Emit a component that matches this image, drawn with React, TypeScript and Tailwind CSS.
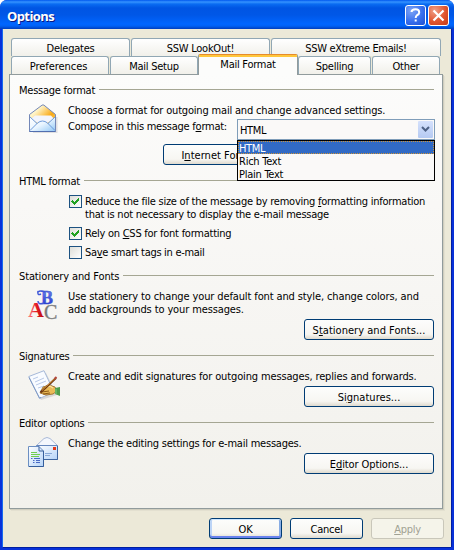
import type { ReactNode } from "react";

function Tab({ className, children }: { className: string; children: ReactNode }) {
  return (
    <div
      className={`flex h-[18px] shrink-0 items-center justify-center rounded-t-[3px] border border-b-0 border-[#91a7b4] bg-linear-to-b from-white to-[#f1f0ea] pt-px whitespace-nowrap ${className}`}
    >
      {children}
    </div>
  );
}

function PushButton({ className = "", children }: { className?: string; children: ReactNode }) {
  return (
    <div
      className={`flex h-[21px] shrink-0 items-center justify-center rounded-[3px] border border-[#003c74] bg-linear-to-b from-[#fdfdfc] via-[#f7f6f2] via-75% to-[#dfdace] pt-px whitespace-nowrap ${className}`}
    >
      <span>{children}</span>
    </div>
  );
}

function Section({ title, track = "", className, children }: { title: string; track?: string; className: string; children: ReactNode }) {
  return (
    <section className={`shrink-0 ${className}`}>
      <div className="flex h-[14px] gap-[4px]">
        <h2 className={`leading-[16px] whitespace-nowrap ${track}`}>{title}</h2>
        <div className="mt-[6px] h-px flex-1 bg-[#a5a693]" />
      </div>
      {children}
    </section>
  );
}

function Check({ on }: { on?: boolean }) {
  return (
    <div className="h-[13px] w-[13px] shrink-0 border border-[#1d5281] bg-linear-to-br from-[#deded8] to-white">
      {on && (
        <svg width="11" height="11" viewBox="0 0 11 11" shapeRendering="crispEdges">
          <path d="M2 4h1v1h1v1h1v-1h1v-1h1v-1h1v-1h1v3h-1v1h-1v1h-1v1h-1v1h-1v-1h-1v-1h-1v-1h-1z" fill="#21a121" />
        </svg>
      )}
    </div>
  );
}

function EnvelopeIcon() {
  return (
    <svg width="32" height="32" viewBox="0 0 32 32" className="shrink-0">
      <defs>
        <linearGradient id="flap" x1="0" x2="1" y1="0" y2="1">
          <stop offset=".25" stopColor="#fff4c8" />
          <stop offset=".6" stopColor="#f9a915" />
          <stop offset="1" stopColor="#fff0b8" />
        </linearGradient>
        <linearGradient id="front" x1="0" x2="1" y1="0" y2="1">
          <stop offset="0" stopColor="#fff" />
          <stop offset=".5" stopColor="#e9f5ff" />
          <stop offset="1" stopColor="#93c8f5" />
        </linearGradient>
      </defs>
      <path d="M3 13 28.500 13 28.500 29 4 29z" fill="#cdcdd0" opacity=".6" />
      <path d="M.500 10.500 13 1.200Q14 .5 15 1.200L26.500 10.500V27.500H.500z" fill="url(#flap)" stroke="#7488b8" />
      <path d="M2 15 6 11.500H22L25 15 18 19H9z" fill="#f3f5fc" />
      <path d="M1 13 8.500 19.500Q13.500 15.500 18.500 19.500L26 13V27H1z" fill="url(#front)" />
      <path d="M1 13 8 19.500M26 13 19 19.500M1 26.500 8.500 19Q13.500 15 18.500 19L26 26.500" fill="none" stroke="#6d9bda" />
      <path d="M.500 27.500H26.500" stroke="#526fb0" />
    </svg>
  );
}

function FontsIcon() {
  return (
    <svg width="32" height="32" viewBox="0 0 32 32" className="shrink-0 overflow-visible">
      <defs>
        <linearGradient id="red" x1="0" x2="1">
          <stop offset="0" stopColor="#ff8888" />
          <stop offset=".5" stopColor="#e51c23" />
          <stop offset="1" stopColor="#b90c13" />
        </linearGradient>
        <linearGradient id="blue" x1="0" x2="0" y1="0" y2="1">
          <stop offset="0" stopColor="#7288ee" />
          <stop offset="1" stopColor="#1c30cf" />
        </linearGradient>
      </defs>
      <g fontFamily="'Liberation Serif', serif" letterSpacing="0">
        <text x="13" y="14" fontSize="18" fontWeight="700" fill="url(#blue)" stroke="#3346c9" strokeWidth=".4">B</text>
        <path d="M10 2Q12 0 17 2M10 1Q9 6 13 4M10 11Q10 15 16 13" fill="none" stroke="#4058d8" strokeWidth="1.500" />
        <text x="0" y="27" fontSize="22" fontWeight="700" fill="url(#red)">A</text>
        <text x="16" y="29" fontSize="20" fill="#777" stroke="#888" strokeWidth=".4">C</text>
      </g>
    </svg>
  );
}

function SignatureIcon() {
  return (
    <svg width="34" height="32" viewBox="0 0 34 32" className="shrink-0">
      <path d="M3 8 18 3 29 25 13 30z" fill="#ccc" opacity=".7" />
      <path d="M.800 6.500 16 .7 26 22 11.500 28.500z" fill="#f8fbff" stroke="#a5b8d8" />
      <path d="M1 7.500 11.500 28 13 27.500" fill="none" stroke="#7d98c4" />
      <path d="M5 9 10 7M7 12 16 8M8 15 18 11M10 18 16 16M12 21 15 20" stroke="#b8c9e8" />
      <path d="M12 23 15 17 21 15 27 17 29 21 25 24 18 25z" fill="#eabb58" stroke="#94621a" strokeWidth=".8" />
      <path d="M14 22 21 21M15 24 22 23" stroke="#8d5a17" />
      <path d="M17 17 22 16 25 18" fill="none" stroke="#ffe39a" strokeWidth="1.500" />
      <path d="M27 18 32 17V26L27 24z" fill="#4e9d4b" />
      <path d="M28 19V24" stroke="#82c87b" />
      <path d="M12.500 22.500 28 8" stroke="#6b3510" strokeWidth="2" />
      <path d="M14 20.500 27 8.500" stroke="#e9a034" strokeWidth=".8" />
      <path d="M26.500 9 28.500 7" stroke="#b4483c" strokeWidth="2" />
    </svg>
  );
}

function EditorIcon() {
  return (
    <svg width="32" height="32" viewBox="0 0 32 32" className="shrink-0">
      <defs>
        <linearGradient id="paper" x1="0" x2="1" y1="0" y2="1">
          <stop offset="0" stopColor="#fff" />
          <stop offset="1" stopColor="#b5d3f8" />
        </linearGradient>
      </defs>
      <path d="M8.500 8.500 16 1.500Q19 -.5 22 1.500L29.500 8.500z" fill="#f4f7fd" stroke="#a9b9d7" />
      <path d="M8.500 8.500H29.500V22.500H8.500z" fill="url(#paper)" stroke="#6586bd" />
      <path d="M29.500 9V22.500H16" fill="none" stroke="#3e659f" />
      <path d="M25 10h3v3h-3z" fill="#e43a18" />
      <path d="M17 16.500H24M17 18.500H22" stroke="#88a8d8" />
      <path d="M.500 9.500H11L15.500 14V29.500H.500z" fill="url(#paper)" stroke="#6c8fc2" />
      <path d="M1 29.500H15.500V14M11 9.500V14H15.500" fill="none" stroke="#365e9c" />
      <path d="M3 15.500H9M3 17.500H12M3 19.500H11" stroke="#70cf50" />
      <path d="M3 21.500H4.500M6 21.500H12M5 23.500H6.500M8 23.500H12M5 25.500H6.500M8 25.500H12" stroke="#496ac4" />
    </svg>
  );
}

export default function App() {
  return (
    <main className="h-[550px] w-[454px] overflow-hidden bg-white font-['DejaVu_Sans_Condensed','DejaVu_Sans',sans-serif] text-[11px] leading-[13px] tracking-[-0.25px] text-black">
      <div className="flex h-full flex-col overflow-hidden rounded-t-[7px] bg-[#0831d9]">
        <header className="flex h-[29px] shrink-0 items-center bg-[linear-gradient(to_bottom,#0058ee_0px,#3593ff_2px,#0a6cf2_4px,#0055e3_8px,#0057e7_15px,#0066ff_24px,#0061f5_26px,#003ebd_29px)] pr-[5px] pl-[7px]">
          <h1 className="flex-1 pt-[3px] font-['Open_Sans',sans-serif] text-[13px] font-bold tracking-[-0.6px] text-white [text-shadow:1px_1px_#0a1883]">Options</h1>
          <div className="flex gap-[2px] pt-[2px]">
            <div className="flex h-[21px] w-[21px] items-center justify-center rounded-[3px] border border-white bg-[radial-gradient(circle_at_30%_25%,#7fa5f5,#376fee_55%,#204fd0)]">
              <svg width="19" height="19" viewBox="0 0 19 19" fill="none" stroke="white" strokeWidth="2">
                <path d="M5.500 6Q5.800 3.300 9.500 3.300T13.200 6.500Q13.200 8.400 10.900 9.300Q9.700 10 9.700 12M9.700 13.500V15.500" />
              </svg>
            </div>
            <div className="flex h-[21px] w-[21px] items-center justify-center rounded-[3px] border border-white bg-[radial-gradient(circle_at_30%_25%,#f0a088,#e0552f_55%,#c83a15)]">
              <svg width="19" height="19" viewBox="0 0 19 19" stroke="white" strokeWidth="2.200">
                <path d="M4.500 4.500 14.500 14.500M14.500 4.500 4.500 14.500" />
              </svg>
            </div>
          </div>
        </header>

        <div className="mr-[3px] mb-[3px] ml-[3px] flex flex-1 flex-col bg-[#ece9d8] px-[6px] pt-[9px] shadow-[-1px_0_#166aee,0_1px_#001ea0,1px_0_#001ea0]">
          <nav className="shrink-0">
            <div className="flex gap-px pl-[2px]">
              <Tab className="w-[119px]">Delegates</Tab>
              <Tab className="w-[139px]">SSW LookOut!</Tab>
              <Tab className="w-[170px] tracking-[-0.33px]">SSW eXtreme Emails!</Tab>
            </div>
            <div className="flex h-[18px] items-end pl-[2px]">
              <Tab className="mr-px w-[98px] pr-[3px] tracking-[-0.05px]">Preferences</Tab>
              <Tab className="w-[88px]">Mail Setup</Tab>
              <div className="z-10 -mb-px flex h-[21px] w-[100px] shrink-0 flex-col overflow-hidden rounded-t-[2px] border-x border-x-[#919b9c] bg-[#fcfcfb]">
                <div className="h-[3px] shrink-0 border-t border-[#e68b2c] bg-[#ffc73c]" />
                <span className="pt-px text-center">Mail Format</span>
              </div>
              <Tab className="mr-px w-[73px]">Spelling</Tab>
              <Tab className="w-[68px]">Other</Tab>
            </div>
          </nav>

          <div className="flex h-[435px] w-[434px] shrink-0 flex-col border border-[#919b9c] bg-linear-to-b from-[#fcfcfb] via-[#f9f8f6] via-30% to-[#f2f1ec] pt-[8px] pr-[8px] pl-[9px] shadow-[1px_1px_#d0cebf,2px_2px_#e3e0d0]">
            <Section title="Message format" className="h-[91px]">
              <div className="flex pt-[7px] pl-[10px]">
                <EnvelopeIcon />
                <div className="shrink-0 pl-[7px]">
                  <p className="tracking-[-0.18px] whitespace-nowrap">Choose a format for outgoing mail and change advanced settings.</p>
                  <div className="flex items-start">
                    <span className="w-[169px] shrink-0 pt-[3px] whitespace-nowrap">Compose in this message f<u>o</u>rmat:</span>
                    <div className="relative mt-[2px] h-[21px] w-[198px] shrink-0 border border-[#7f9db9] bg-[#faf9f8]">
                      <div className="flex h-full items-center justify-between pr-px pl-[2px]">
                        <span className="pt-[2px] tracking-[-0.35px]">HTML</span>
                        <div className="flex h-[17px] w-[15px] items-center justify-center rounded-[1px] bg-linear-to-b from-[#d5e1fc] to-[#b5caf2]">
                          <svg width="9" height="7" viewBox="0 0 9 7" fill="none" stroke="#4d6185" strokeWidth="2">
                            <path d="M1 1 4.500 4.500 8 1" />
                          </svg>
                        </div>
                      </div>
                      <div className="absolute top-[20px] -left-px z-10 h-[41px] w-[198px] border border-black bg-[#faf9f8]">
                        <div className="h-[13px] border border-dotted border-[#ce953a] bg-[#316ac5] leading-[13px] tracking-[-0.35px] text-white">HTML</div>
                        <div className="h-[13px] pl-px leading-[15px]">Rich Text</div>
                        <div className="h-[13px] pl-px leading-[15px]">Plain Text</div>
                      </div>
                    </div>
                  </div>
                </div>
              </div>
              <PushButton className="mt-[4px] ml-[144px] w-[124px] tracking-[0.03px]">I<u>n</u>ternet Format...</PushButton>
            </Section>

            <Section title="HTML format" className="h-[95px]">
              <div className="flex gap-[3px] pt-[7px] pl-[50px]">
                <Check on />
                <p className="tracking-[-0.24px] whitespace-nowrap">
                  Reduce the file size of the message by removing <u>f</u>ormatting information
                  <br />
                  that is not necessary to display the e-mail message
                </p>
              </div>
              <div className="flex gap-[3px] pt-[6px] pl-[50px]">
                <Check on />
                <p className="whitespace-nowrap">Rely on <u>C</u>SS for font formatting</p>
              </div>
              <div className="flex gap-[3px] pt-[6px] pl-[50px]">
                <Check />
                <p className="tracking-[-0.3px] whitespace-nowrap">Sa<u>v</u>e smart tags in e-mail</p>
              </div>
            </Section>

            <Section title="Stationery and Fonts" track="tracking-[-0.12px]" className="h-[80px]">
              <div className="flex h-[36px] pt-[7px] pl-[9px]">
                <FontsIcon />
                <p className="pl-[8px] tracking-[-0.12px] whitespace-nowrap">
                  Use stationery to change your default font and style, change colors, and
                  <br />
                  add backgrounds to your messages.
                </p>
              </div>
              <PushButton className="ml-auto w-[130px] tracking-[0.03px]">S<u>t</u>ationery and Fonts...</PushButton>
            </Section>

            <Section title="Signatures" className="h-[67px]">
              <div className="flex h-[23px] pt-[7px] pl-[9px]">
                <SignatureIcon />
                <p className="pl-[6px] tracking-[-0.14px] whitespace-nowrap">Create and edit signatures for outgoing messages, replies and forwards.</p>
              </div>
              <PushButton className="ml-auto w-[130px] tracking-[0.03px]">Si<u>g</u>natures...</PushButton>
            </Section>

            <Section title="Editor options" className="h-[80px]">
              <div className="flex h-[23px] pt-[7px] pl-[9px]">
                <EditorIcon />
                <p className="pl-[8px] tracking-[-0.22px] whitespace-nowrap">Change the editing settings for e-mail messages.</p>
              </div>
              <PushButton className="ml-auto w-[130px] tracking-[-0.1px]">E<u>d</u>itor Options...</PushButton>
            </Section>
          </div>

          <footer className="flex justify-end gap-[8px] pt-[9px] pr-px">
            <PushButton className="w-[73px] shadow-[inset_0_1px_#cee7ff,inset_0_-2px_#6982ee,inset_2px_0_#bcd4f6,inset_-2px_0_#89ade4]">OK</PushButton>
            <PushButton className="w-[73px]">Cancel</PushButton>
            <div className="flex h-[21px] w-[73px] items-center justify-center rounded-[3px] border border-[#c9c7ba] bg-[#f5f4ea] pt-px text-[#a1a192]">
              <span><u>A</u>pply</span>
            </div>
          </footer>
        </div>
      </div>
    </main>
  );
}
